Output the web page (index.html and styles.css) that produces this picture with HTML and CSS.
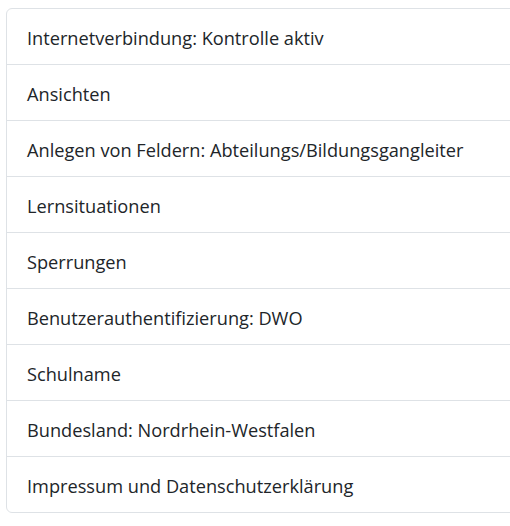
FILE: index.html
```html
<!DOCTYPE html>
<html lang="de">
<head>
<meta charset="utf-8">
<link rel="stylesheet" href="styles.css">
</head>
<body>
<ul class="list">
  <li class="item">Internetverbindung: Kontrolle aktiv</li>
  <li class="item">Ansichten</li>
  <li class="item">Anlegen von Feldern: Abteilungs/Bildungsgangleiter</li>
  <li class="item">Lernsituationen</li>
  <li class="item">Sperrungen</li>
  <li class="item">Benutzerauthentifizierung: DWO</li>
  <li class="item">Schulname</li>
  <li class="item">Bundesland: Nordrhein-Westfalen</li>
  <li class="item">Impressum und Datenschutzerklärung</li>
</ul>
</body>
</html>
```

FILE: styles.css
```css
html, body {
  margin: 0;
  padding: 0;
  overflow: hidden;
  background: #fff;
}
body {
  padding: 8px 0 0 6px;
  font-family: "Open Sans", "Noto Sans", sans-serif;
  color: #212529;
}
.list {
  list-style: none;
  margin: 0;
  padding: 0;
  width: 520px;
  border: 1px solid #dee2e6;
  border-radius: 6px;
  box-sizing: border-box;
}
.item {
  padding: 17px 20px 14px 20px;
  font-size: 18.2px;
  line-height: 24px;
  white-space: nowrap;
}
.item + .item {
  border-top: 1px solid #dee2e6;
}
```
